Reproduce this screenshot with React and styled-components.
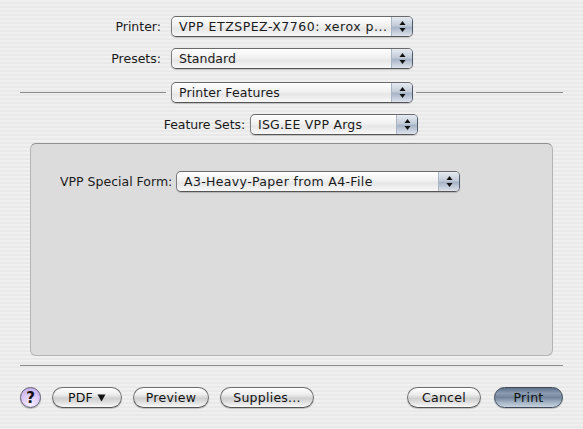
import styled, { createGlobalStyle } from 'styled-components';

const Global = createGlobalStyle`
  html, body {
    margin: 0;
    padding: 0;
    background: #ececec;
  }
`;

const Sheet = styled.div`
  width: 583px;
  height: 429px;
  box-sizing: border-box;
  padding: 16px 20px 0;
  overflow: hidden;
  font-family: "DejaVu Sans", "Liberation Sans", sans-serif;
  font-size: 12.5px;
  color: #1a1a1a;
  background: repeating-linear-gradient(to bottom, #f0f0f0 0, #f0f0f0 2px, #e9e9e9 2px, #e9e9e9 4px);
`;

const Row = styled.div`
  display: flex;
  align-items: center;
  height: 21px;
  margin-top: ${(p) => p.$top || 0}px;
  margin-left: ${(p) => p.$left || 0}px;
`;

const Label = styled.label`
  width: ${(p) => p.$width}px;
  flex: none;
  text-align: right;
  white-space: nowrap;
  line-height: 23px;
  letter-spacing: ${(p) => p.$tight ? -0.1 : 0}px;
  margin-right: ${(p) => p.$gap || 10}px;
`;

const Select = styled.div`
  display: flex;
  flex: none;
  width: ${(p) => p.$width}px;
  height: 21px;
  box-sizing: border-box;
  border: 1px solid #7d7d7d;
  border-top-color: #6a6a6a;
  border-right-color: #4f5a6a;
  border-bottom-color: #555;
  border-radius: 5px;
  overflow: hidden;
  box-shadow: 0 1px 1px rgba(0, 0, 0, 0.18);
  background: linear-gradient(to bottom, #fff 0, #f1f1f1 45%, #e6e6e6 60%, #f8f8f8 100%);
`;

const SelectText = styled.span`
  flex: 1;
  padding-left: 7px;
  line-height: 19px;
  white-space: nowrap;
  letter-spacing: ${(p) => p.$spacing ?? 0.25}px;
`;

const Stepper = styled.span`
  flex: none;
  width: 20px;
  display: flex;
  align-items: center;
  justify-content: center;
  border-left: 1px solid #a9b4c4;
  background: linear-gradient(to bottom, #e6ebf2 0, #c3ccd9 45%, #a7b3c6 55%, #dde3ec 100%);
`;

const Arrows = () => (
  <svg width="7" height="13" viewBox="0 0 7 13">
    <path d="M3.5 1 L6.5 5 H0.5 Z M0.5 8 H6.5 L3.5 12 Z" fill="#111" />
  </svg>
);

const Popup = ({ width, spacing, children }) => (
  <Select $width={width}>
    <SelectText $spacing={spacing}>{children}</SelectText>
    <Stepper>
      <Arrows />
    </Stepper>
  </Select>
);

const Rule = styled.div`
  height: 1px;
  background: #8a8a8a;
`;

const RuleLeft = styled(Rule)`
  flex: none;
  width: 146px;
  margin-right: 5px;
`;

const RuleRight = styled(Rule)`
  flex: 1;
  margin-left: 3px;
`;

const Panel = styled.div`
  box-sizing: border-box;
  height: 213px;
  margin: 8px 10px 0;
  padding: 27px 0 0 29px;
  border: 1px solid #b4b4b4;
  border-top-color: #8f8f8f;
  border-radius: 6px;
  background: #dcdcdc;
`;

const Divider = styled.div`
  height: 1px;
  margin-top: 9px;
  background: #8a8a8a;
`;

const Footer = styled.div`
  display: flex;
  align-items: center;
  height: 21px;
  margin-top: 21px;
`;

const Help = styled.button`
  flex: none;
  width: 21px;
  height: 21px;
  padding: 0;
  margin-right: 11px;
  border: 1px solid #5f5f72;
  border-radius: 50%;
  font: bold 15px "DejaVu Sans", sans-serif;
  color: #111;
  background: radial-gradient(circle at 50% 85%, #f6eeff 0, #d9c6f8 55%, #bda5e8 100%);
  box-shadow: 0 1px 1px rgba(0, 0, 0, 0.25);
`;

const Pill = styled.button`
  flex: none;
  display: flex;
  align-items: center;
  justify-content: center;
  gap: 4px;
  width: ${(p) => p.$width}px;
  height: 21px;
  padding: 0;
  margin-left: ${(p) => p.$left || 0}px;
  border: 1px solid #6f6f6f;
  border-bottom-color: #555;
  border-radius: 11px;
  font: inherit;
  letter-spacing: 0.25px;
  color: #111;
  background: linear-gradient(to bottom, #fff 0, #ececec 35%, #cfcfcf 55%, #e4e4e4 80%, #fafafa 100%);
  box-shadow: 0 1px 1px rgba(0, 0, 0, 0.2);
`;

const PrintButton = styled(Pill)`
  border-color: #3f4a5a;
  background: linear-gradient(to bottom, #5d7089 0, #8c9db3 28%, #71859c 50%, #a3b3c4 75%, #c8d3de 100%);
`;

const Spacer = styled.div`
  flex: 1;
`;

export default function App() {
  return (
    <Sheet>
      <Global />
      <Row>
        <Label $width={141}>Printer:</Label>
        <Popup width={242} spacing={0.5}>VPP ETZSPEZ-X7760: xerox p...</Popup>
      </Row>
      <Row $top={11}>
        <Label $width={141}>Presets:</Label>
        <Popup width={242} spacing={0}>Standard</Popup>
      </Row>
      <Row $top={13}>
        <RuleLeft />
        <Popup width={242} spacing={0.1}>Printer Features</Popup>
        <RuleRight />
      </Row>
      <Row $top={11}>
        <Label $width={225} $gap={5} $tight>Feature Sets:</Label>
        <Popup width={168}>ISG.EE VPP Args</Popup>
      </Row>
      <Panel>
        <Row>
          <Label $width={111} $gap={5}>VPP Special Form:</Label>
          <Popup width={284} spacing={0.35}>A3-Heavy-Paper from A4-File</Popup>
        </Row>
      </Panel>
      <Divider />
      <Footer>
        <Help>?</Help>
        <Pill $width={70}>
          PDF
          <svg width="9" height="8" viewBox="0 0 9 8">
            <path d="M0.5 0.5 H8.5 L4.5 7.5 Z" fill="#111" />
          </svg>
        </Pill>
        <Pill $width={76} $left={11}>Preview</Pill>
        <Pill $width={94} $left={11}>Supplies...</Pill>
        <Spacer />
        <Pill $width={74}>Cancel</Pill>
        <PrintButton $width={69} $left={13}>Print</PrintButton>
      </Footer>
    </Sheet>
  );
}
